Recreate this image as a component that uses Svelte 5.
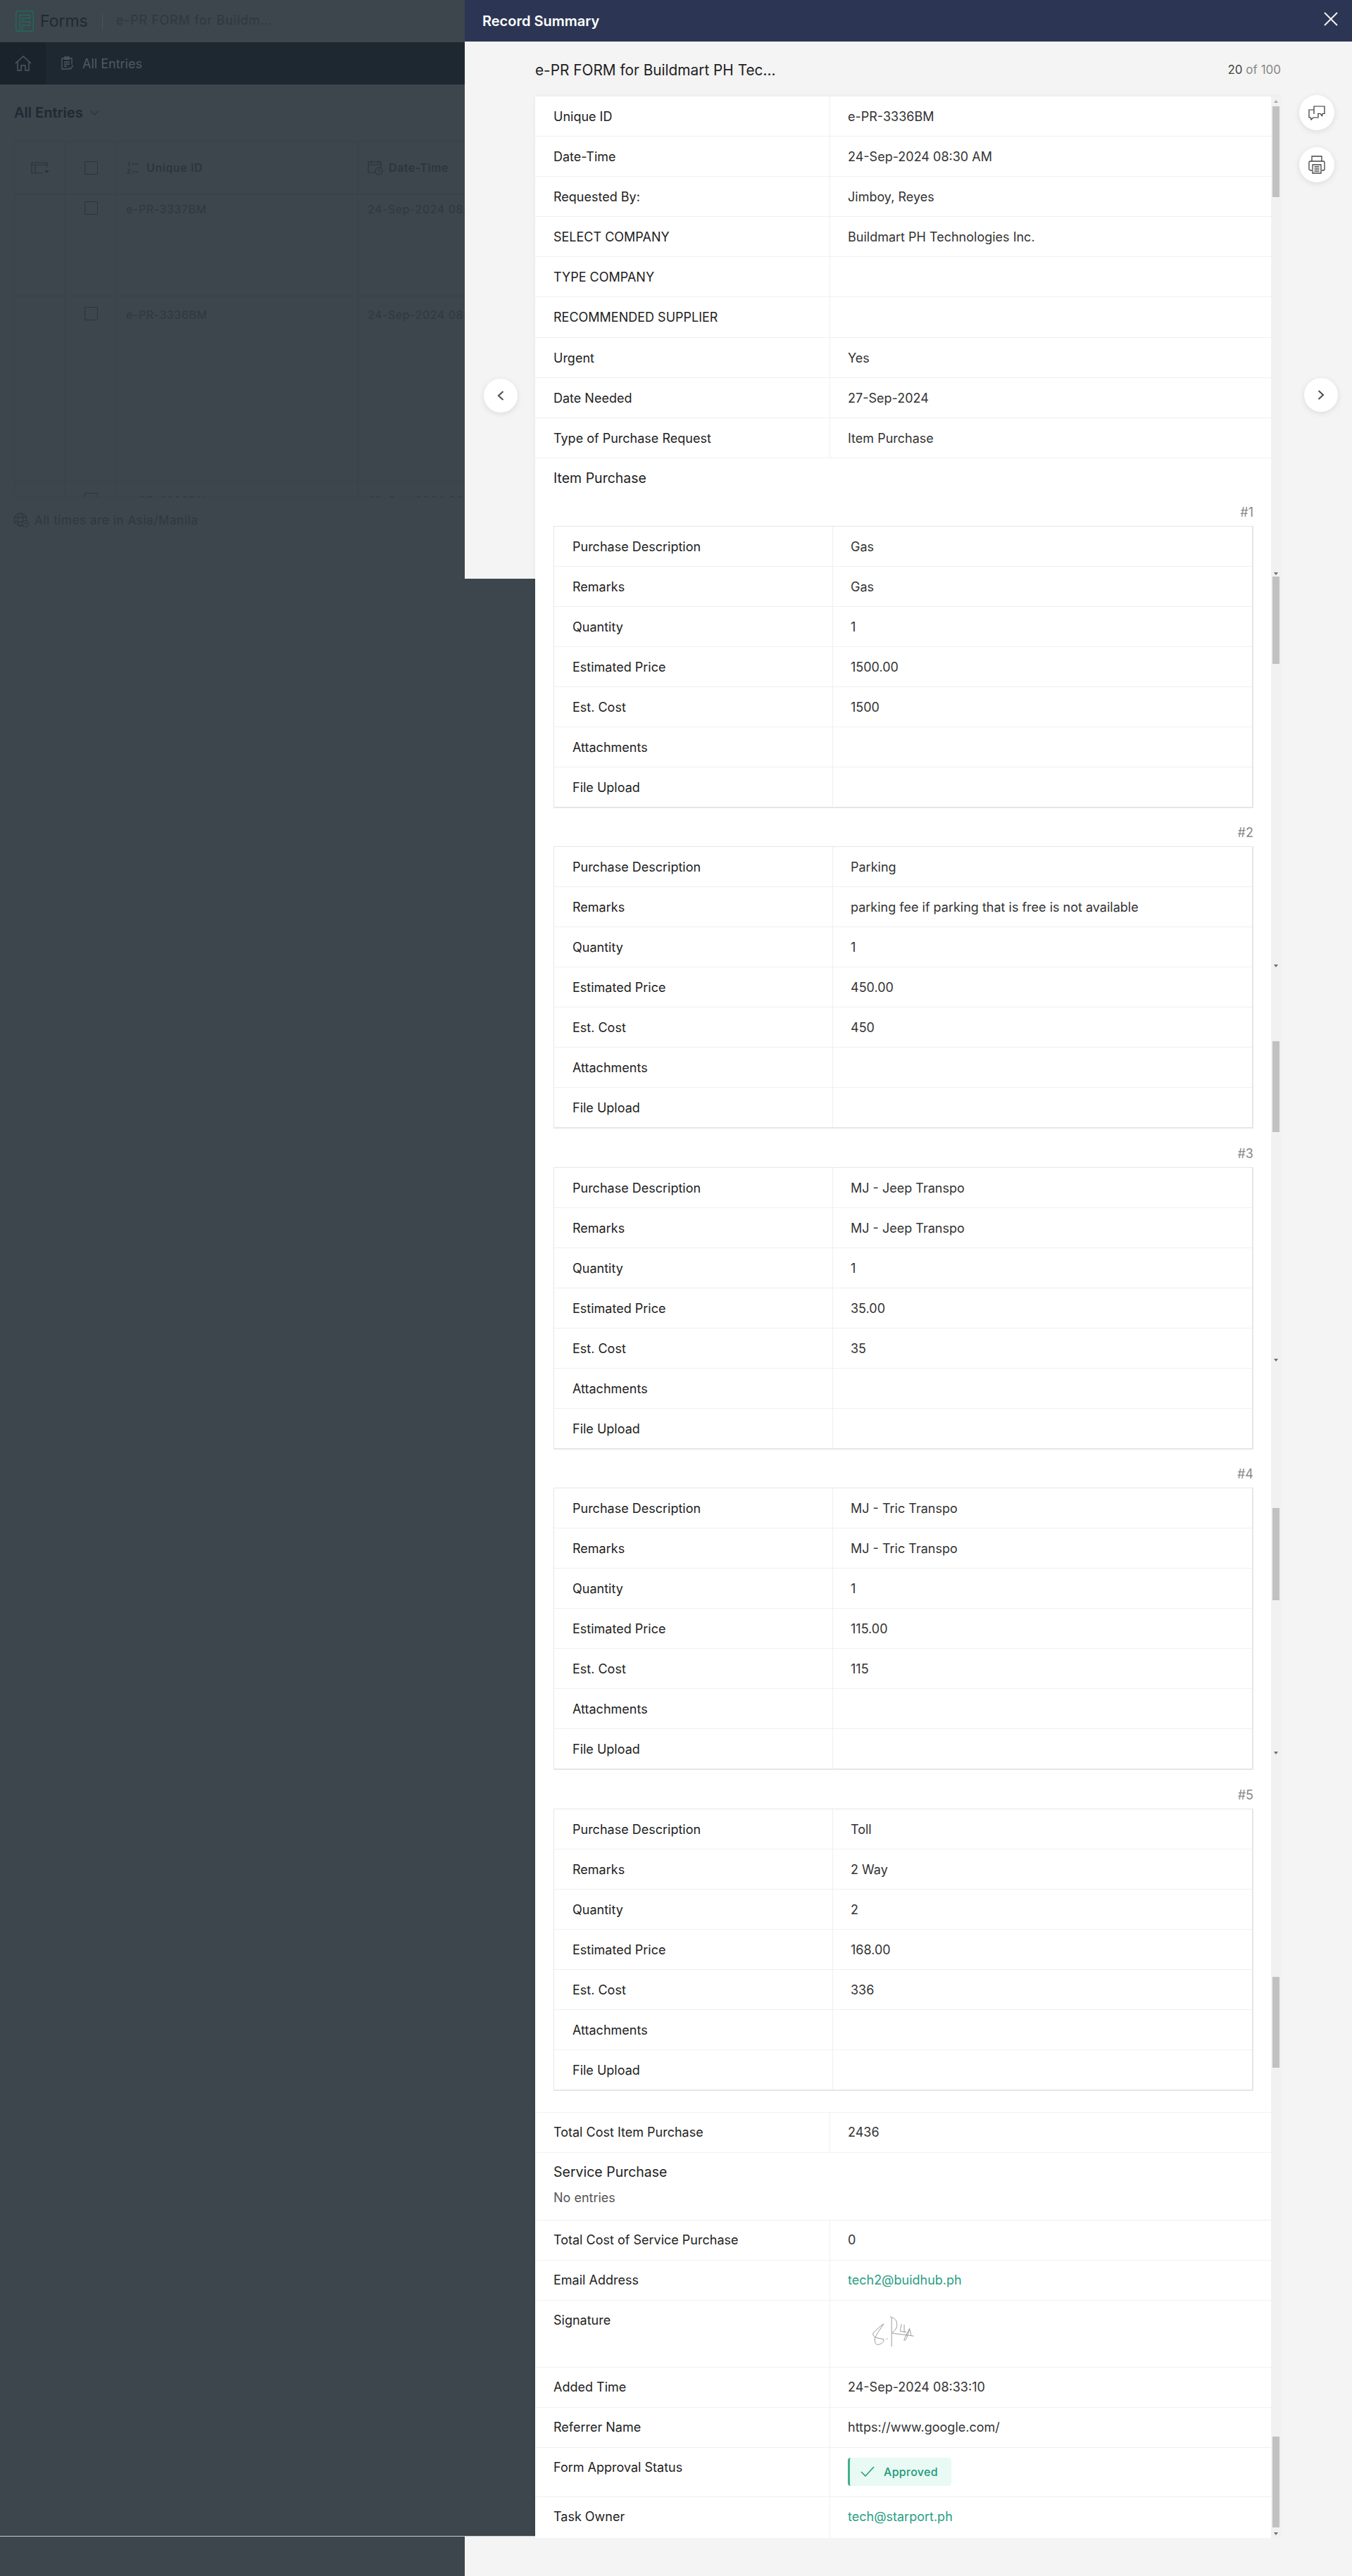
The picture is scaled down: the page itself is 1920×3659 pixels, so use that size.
<script>
	const topRows = [
		["Unique ID", "e-PR-3336BM"],
		["Date-Time", "24-Sep-2024 08:30 AM"],
		["Requested By:", "Jimboy, Reyes"],
		["SELECT COMPANY", "Buildmart PH Technologies Inc."],
		["TYPE COMPANY", ""],
		["RECOMMENDED SUPPLIER", ""],
		["Urgent", "Yes"],
		["Date Needed", "27-Sep-2024"],
		["Type of Purchase Request", "Item Purchase"],
	];

	const items = [
		{ desc: "Gas", remarks: "Gas", qty: "1", price: "1500.00", cost: "1500" },
		{ desc: "Parking", remarks: "parking fee if parking that is free is not available", qty: "1", price: "450.00", cost: "450" },
		{ desc: "MJ - Jeep Transpo", remarks: "MJ - Jeep Transpo", qty: "1", price: "35.00", cost: "35" },
		{ desc: "MJ - Tric Transpo", remarks: "MJ - Tric Transpo", qty: "1", price: "115.00", cost: "115" },
		{ desc: "Toll", remarks: "2 Way", qty: "2", price: "168.00", cost: "336" },
	];

	const itemFields = (it) => [
		["Purchase Description", it.desc],
		["Remarks", it.remarks],
		["Quantity", it.qty],
		["Estimated Price", it.price],
		["Est. Cost", it.cost],
		["Attachments", ""],
		["File Upload", ""],
	];

	// pieces of the stitched scrollbar, offsets from the card top
	const thumbs = [
		[14, 129],
		[682, 124],
		[1342, 129],
		[2005, 131],
		[2671, 129],
		[3324, 129],
	];
	const arrows = [676, 1233, 1793, 2351, 3460];
</script>

<div class="page">
	<header class="topbar">
		<svg class="logo" viewBox="0 0 26 30" fill="none" stroke="#1f6b58" stroke-width="1.4">
			<rect x="0.7" y="0.7" width="24.6" height="28.6" rx="2.5" />
			<path d="M6 28V6.5h14.5V11H9.5M9.5 11v5h11v5H9.500v7" />
		</svg>
		<span class="brand">Forms</span>
		<span class="sep"></span>
		<span class="form-name">e-PR FORM for Buildm...</span>
	</header>

	<nav class="navbar">
		<div class="home">
			<svg viewBox="0 0 24 22" width="24" height="22" fill="none" stroke="#4d5a65" stroke-width="1.4">
				<path d="M1 11 12 1l11 10M4 9v12h5v-7h6v7h5V9" />
			</svg>
		</div>
		<div class="nav-item">
			<svg viewBox="0 0 20 20" width="20" height="20" fill="none" stroke="#4d5a65" stroke-width="1.3">
				<path d="M12 18H2V3h14v9M6 1h6v3H6zM5 8h8M5 11h8M5 14h4M12 16l2 2 4-5" />
			</svg>
			<span>All Entries</span>
		</div>
	</nav>

	<div class="view-title">
		<span>All Entries</span>
		<svg viewBox="0 0 12 7" width="12" height="7" fill="none" stroke="#2a343d" stroke-width="1.1"><path d="m.5.5 5.500 5.500L11.500.5" /></svg>
	</div>

	<div class="table">
		<div class="t-row t-head">
			<div class="cell c1">
				<svg viewBox="0 0 26 17" width="26" height="17" fill="none" stroke="#2a343d" stroke-width="1.1">
					<path d="M1 1h22v6M1 4h22M1 1v15h16M6 4v12" /><path d="m19 12h7l-3.500 4z" fill="#2a343d" stroke="none" />
				</svg>
			</div>
			<div class="cell c2"><span class="check"></span></div>
			<div class="cell c3">
				<svg viewBox="0 0 18 19" width="18" height="19" fill="none" stroke="#2a343d" stroke-width="1.1">
					<path d="M2 3 3.500 1.500V8M7 4h10M1 11.500h4l-4 5.500h4.500M7 15h10" />
				</svg>
				<span>Unique ID</span>
			</div>
			<div class="cell c4">
				<svg viewBox="0 0 22 22" width="22" height="22" fill="none" stroke="#2a343d" stroke-width="1.1">
					<path d="M11 18H1V3h18v9M1 7h18M5 1v4M15 1v4" /><circle cx="16" cy="16" r="5" /><path d="M16 13v3h2" />
				</svg>
				<span>Date-Time</span>
			</div>
		</div>
		<div class="t-row t-r1">
			<div class="cell c1"></div>
			<div class="cell c2"><span class="check"></span></div>
			<div class="cell c3 val">e-PR-3337BM</div>
			<div class="cell c4 val">24-Sep-2024 08:30 AM</div>
		</div>
		<div class="t-row t-r2">
			<div class="cell c1"></div>
			<div class="cell c2"><span class="check"></span></div>
			<div class="cell c3 val">e-PR-3336BM</div>
			<div class="cell c4 val">24-Sep-2024 08:30 AM</div>
		</div>
		<div class="t-row t-r3">
			<div class="cell c1"></div>
			<div class="cell c2"><span class="check"></span></div>
			<div class="cell c3 val">e-PR-3335BM</div>
			<div class="cell c4 val">20-Sep-2024 09:00 AM</div>
		</div>
	</div>

	<div class="tz">
		<svg viewBox="0 0 22 21" width="22" height="21" fill="none" stroke="#2a343d" stroke-width="1">
			<circle cx="10" cy="10" r="9" /><ellipse cx="10" cy="10" rx="4" ry="9" /><path d="M1 7h18M1 13h13" />
			<circle cx="17" cy="16" r="4.500" fill="#3d454d" /><path d="M17 14v2.500h1.500" />
		</svg>
		<span>All times are in Asia/Manila</span>
	</div>

	<div class="spacer"></div>
	<div class="fold"></div>
	<div class="page-end"></div>
</div>

<section class="panel">
	<div class="panel-head">
		<span>Record Summary</span>
		<svg viewBox="0 0 20 20" width="20" height="20" fill="none" stroke="#f0f1f4" stroke-width="2"><path d="m1 1 18 18M19 1 1 19" /></svg>
	</div>

	<div class="panel-body">
		<div class="side-left">
			<div class="side-top">
				<button class="round nav-btn" aria-label="Previous record">
					<svg viewBox="0 0 10 14" width="10" height="14" fill="none" stroke="#555" stroke-width="2.200"><path d="M8.500 1 2 7l6.500 6" /></svg>
				</button>
			</div>
			<div class="side-bottom"></div>
		</div>

		<div class="center">
			<div class="title-row">
				<span class="title">e-PR FORM for Buildmart PH Tec...</span>
				<span class="count"><b>20</b> of 100</span>
			</div>

			<div class="card">
				<div class="content">
					{#each topRows as [label, value]}
						<div class="row upper"><div class="lbl">{label}</div><div class="val-cell">{value}</div></div>
					{/each}

					<div class="section">
						<div class="section-title">Item Purchase</div>
						{#each items as it, i}
							<div class="item">
								<div class="item-no">#{i + 1}</div>
								<div class="subform">
									{#each itemFields(it) as [label, value]}
										<div class="sub-row"><div class="sub-lbl">{label}</div><div class="sub-val">{value}</div></div>
									{/each}
								</div>
							</div>
						{/each}
					</div>

					<div class="row"><div class="lbl">Total Cost Item Purchase</div><div class="val-cell">2436</div></div>
					<div class="service">
						<div class="service-title">Service Purchase</div>
						<div class="no-entries">No entries</div>
					</div>
					<div class="row"><div class="lbl">Total Cost of Service Purchase</div><div class="val-cell">0</div></div>
					<div class="row"><div class="lbl">Email Address</div><div class="val-cell link">tech2@buidhub.ph</div></div>
					<div class="row sig-row">
						<div class="lbl">Signature</div>
						<div class="val-cell">
							<svg class="sig" viewBox="140 50 190 140" fill="none" stroke="#8b8b8b" stroke-width="2.600" stroke-linecap="round">
								<path d="M190 90 150 125c-6 10 4 22 20 24l24 5c2 10-6 18-20 22-12 4-18-2-18-26 8-20 24-40 38-62" />
								<path d="M207 152h3" />
								<path d="M228 62v122M222 58c14 4 26 10 28 24 2 16 2 28-20 44" />
								<path d="M270 90c-2 14-6 26-4 30l24 3M282 92v32" />
								<path d="M305 108c-8 16-20 36-24 50 6 4 12-8 16-24l8-24 6 26" />
								<path d="M232 128l90 12" />
							</svg>
						</div>
					</div>
					<div class="row"><div class="lbl">Added Time</div><div class="val-cell">24-Sep-2024 08:33:10</div></div>
					<div class="row referrer"><div class="lbl">Referrer Name</div><div class="val-cell">https://www.google.com/</div></div>
					<div class="row status-row">
						<div class="lbl">Form Approval Status</div>
						<div class="val-cell">
							<span class="badge">
								<svg viewBox="0 0 20 15" width="20" height="15" fill="none" stroke="#1f9a7c" stroke-width="1.500"><path d="m1 8 6 6L19 1" /></svg>
								Approved
							</span>
						</div>
					</div>
					<div class="row last"><div class="lbl">Task Owner</div><div class="val-cell link">tech@starport.ph</div></div>
				</div>

				<div class="track">
					<span class="arrow up" style="top: 5px"></span>
					{#each thumbs as [top, h]}
						<span class="thumb" style="top: {top}px; height: {h}px"></span>
					{/each}
					{#each arrows as top}
						<span class="arrow" style="top: {top}px"></span>
					{/each}
				</div>
			</div>

			<div class="card-end"></div>
		</div>

		<div class="side-right">
			<button class="round tool first" aria-label="Comments">
				<svg viewBox="0 0 24 21" width="24" height="21" fill="none" stroke="#333" stroke-width="1.200">
					<path d="M8 12V1h15v10.500h-3l-.500 3-2.500-3h-4" />
					<path d="M8 6H1v11h2.500l.500 3 3-3h7v-5" />
				</svg>
			</button>
			<button class="round tool" aria-label="Print">
				<svg viewBox="0 0 24 26" width="24" height="26" fill="none" stroke="#444" stroke-width="1.300">
					<path d="M5 8V1h14v7M5 21H3a2 2 0 0 1-2-2v-9a2 2 0 0 1 2-2h18a2 2 0 0 1 2 2v9a2 2 0 0 1-2 2h-2" />
					<path d="M6 13h12v12H6zM8.500 16h7M8.500 19h7M8.500 22h7" />
				</svg>
			</button>
			<button class="round nav-btn next" aria-label="Next record">
				<svg viewBox="0 0 10 14" width="10" height="14" fill="none" stroke="#555" stroke-width="2.200"><path d="m1.500 1 6.500 6-6.500 6" /></svg>
			</button>
		</div>
	</div>
</section>

<style>
	:global(body) {
		margin: 0;
		font-family: Inter, "Liberation Sans", sans-serif;
		color: #222;
	}

	* {
		box-sizing: border-box;
	}

	.page {
		height: 3659px;
		background: #3d454d;
		display: flex;
		flex-direction: column;
		overflow: hidden;
	}

	.topbar {
		height: 60px;
		display: flex;
		align-items: center;
		padding-left: 22px;
		flex-shrink: 0;
	}

	.logo {
		width: 26px;
		height: 30px;
	}

	.brand {
		margin-left: 9px;
		font-size: 23px;
		color: #1f2a33;
	}

	.sep {
		width: 1px;
		height: 22px;
		background: #4a525a;
		margin: 0 19px 0 20px;
	}

	.form-name {
		font-size: 18px;
		color: #2e3842;
		letter-spacing: 0.7px;
		position: relative;
		top: -2px;
	}

	.navbar {
		height: 60px;
		background: #1e2831;
		display: flex;
		flex-shrink: 0;
	}

	.home {
		width: 65px;
		background: #1a232c;
		display: flex;
		align-items: center;
		justify-content: center;
	}

	.nav-item {
		display: flex;
		align-items: center;
		gap: 11px;
		padding-left: 21px;
		font-size: 18px;
		color: #4f5a64;
	}

	.view-title {
		height: 80px;
		padding-left: 20px;
		display: flex;
		align-items: center;
		gap: 10px;
		font-size: 20px;
		font-weight: 600;
		color: #1f2933;
		flex-shrink: 0;
	}

	.table {
		margin-left: 20px;
		width: 1400px;
		height: 507px;
		overflow: hidden;
		border: 1px solid #38424c;
		border-radius: 4px;
		flex-shrink: 0;
	}

	.t-row {
		display: flex;
		border-bottom: 1px solid #38424c;
	}

	.t-head {
		height: 75px;
	}
	.t-r1 {
		height: 145px;
	}
	.t-r2 {
		height: 264px;
	}
	.t-r3 {
		height: 60px;
	}

	.cell {
		border-right: 1px solid #38424c;
		font-size: 16px;
		letter-spacing: 0.6px;
	}

	.c1 {
		width: 72px;
	}
	.c2 {
		width: 72px;
	}
	.c3 {
		width: 343px;
	}
	.c4 {
		flex: 1;
	}

	.t-head .cell {
		display: flex;
		align-items: center;
		color: #2a343d;
		font-weight: 500;
	}

	.t-head .c1 {
		justify-content: center;
	}

	.t-head .c3 {
		padding-left: 15px;
		gap: 10px;
	}

	.t-head .c4 {
		padding-left: 14px;
		gap: 8px;
	}

	.c2 {
		padding-left: 27px;
	}

	.check {
		display: block;
		width: 19px;
		height: 19px;
		border: 1px solid #2b3540;
		border-radius: 2px;
	}

	.t-r1 .c2 {
		padding-top: 10px;
	}

	.t-r2 .c2,
	.t-r3 .c2 {
		padding-top: 15px;
	}

	.val {
		padding: 10px 0 0 14px;
		color: #2e3842;
		line-height: 22px;
	}

	.t-r2 .val,
	.t-r3 .val {
		padding-top: 15px;
	}

	.tz {
		margin: 21px 0 0 19px;
		display: flex;
		align-items: center;
		gap: 8px;
		font-size: 17px;
		letter-spacing: 0.6px;
		color: #2e3842;
		flex-shrink: 0;
	}

	.spacer {
		flex: 1;
	}

	.fold {
		height: 1px;
		background: #c8ccd0;
		flex-shrink: 0;
	}

	.page-end {
		height: 56px;
		flex-shrink: 0;
	}

	.panel {
		position: absolute;
		top: 0;
		left: 660px;
		width: 1260px;
		height: 3659px;
		display: flex;
		flex-direction: column;
	}

	.panel-head {
		height: 59px;
		background: #2c3654;
		color: #fff;
		font-size: 20px;
		font-weight: 600;
		display: flex;
		align-items: center;
		justify-content: space-between;
		padding: 0 20px 0 25px;
		flex-shrink: 0;
	}

	.panel-head svg {
		position: relative;
		top: -3px;
	}

	.panel-body {
		flex: 1;
		display: flex;
	}

	.side-left {
		width: 100px;
		display: flex;
		flex-direction: column;
		justify-content: space-between;
	}

	.side-top {
		height: 763px;
		background: #f4f4f4;
		padding: 479px 0 0 27px;
	}

	.side-bottom {
		height: 56px;
		background: #f4f4f4;
	}

	.round {
		display: flex;
		align-items: center;
		justify-content: center;
		border: none;
		padding: 0;
		background: #fff;
		border-radius: 50%;
		box-shadow: 0 2px 8px rgba(0, 0, 0, 0.1);
	}

	.nav-btn {
		width: 48px;
		height: 48px;
	}

	.center {
		width: 1060px;
		display: flex;
		flex-direction: column;
	}

	.title-row {
		height: 78px;
		background: #f4f4f4;
		display: flex;
		align-items: center;
		justify-content: space-between;
		padding-right: 1px;
		padding-top: 2px;
		flex-shrink: 0;
	}

	.title {
		font-size: 20.800px;
		font-weight: 400;
		color: #222;
	}

	.count {
		font-size: 17px;
		color: #888;
	}

	.count b {
		font-weight: 400;
		color: #444;
	}

	.card {
		display: flex;
		background: #fff;
		box-shadow: 0 0 6px rgba(0, 0, 0, 0.06);
	}

	.content {
		width: 1045px;
		flex-shrink: 0;
		font-size: 18px;
	}

	.track {
		width: 15px;
		background: #f1f1f1;
		position: relative;
	}

	.thumb {
		position: absolute;
		left: 2px;
		width: 10px;
		background: #c1c1c1;
	}

	.arrow {
		position: absolute;
		left: 4px;
		border-left: 3.500px solid transparent;
		border-right: 3.500px solid transparent;
		border-top: 4px solid #6e6e6e;
	}

	.arrow.up {
		border-top: none;
		border-bottom: 4px solid #a8a8a8;
	}

	.row {
		display: flex;
		height: 57.1px;
		border-bottom: 1px solid #f0f0f0;
	}

	.lbl {
		width: 419px;
		padding-left: 26px;
		border-right: 1px solid #f0f0f0;
		line-height: 55px;
		color: #222;
		flex-shrink: 0;
	}

	.val-cell {
		flex: 1;
		padding-left: 25px;
		line-height: 55px;
		color: #333;
	}

	.upper .lbl,
	.upper .val-cell {
		line-height: 58px;
	}

	.link {
		color: #2b9e85;
	}

	.section {
		padding: 0 25px 30px 26px;
		border-bottom: 1px solid #f0f0f0;
	}

	.section-title {
		height: 58px;
		line-height: 57px;
		font-size: 19.500px;
	}

	.item + .item {
		margin-top: 16.500px;
	}

	.item-no {
		height: 38px;
		line-height: 38px;
		text-align: right;
		color: #888;
	}

	.subform {
		border: 1px solid #e6e6e6;
		border-right-width: 2px;
		border-bottom-width: 2px;
	}

	.sub-row {
		display: flex;
		height: 57px;
		border-bottom: 1px solid #f0f0f0;
	}

	.sub-row:last-child {
		border-bottom: none;
		height: 56px;
	}

	.sub-lbl {
		width: 396px;
		padding-left: 26px;
		border-right: 1px solid #f0f0f0;
		line-height: 58px;
		flex-shrink: 0;
	}

	.sub-val {
		flex: 1;
		padding-left: 25px;
		line-height: 58px;
		color: #333;
	}

	.service {
		height: 96px;
		padding-left: 26px;
		border-bottom: 1px solid #f0f0f0;
	}

	.service-title {
		line-height: 55px;
		height: 56px;
		font-size: 19.500px;
	}

	.no-entries {
		color: #555;
		line-height: 22px;
		margin-top: -3px;
	}

	.sig-row {
		height: 94.500px;
	}

	.sig {
		display: block;
		width: 63px;
		height: 47px;
		margin: 20px 0 0 33px;
	}

	.status-row {
		height: 70px;
	}

	.badge {
		display: inline-flex;
		align-items: center;
		gap: 13px;
		width: 147px;
		height: 40px;
		margin-top: 14px;
		padding-left: 15px;
		background: #e8faf3;
		border-left: 3px solid #3fb08f;
		border-radius: 4px;
		color: #1f9a7c;
		font-size: 16px;
		font-weight: 500;
		letter-spacing: 0.3px;
		line-height: 40px;
		vertical-align: top;
	}

	.last {
		border-bottom: none;
		height: 58px;
	}

	.card-end {
		flex: 1;
		background: #f4f4f4;
	}

	.side-right {
		width: 100px;
		background: #f4f4f4;
		padding-top: 76px;
	}

	.tool {
		width: 50px;
		height: 50px;
		margin: 0 0 24px 25px;
	}

	.next {
		margin: 278px 0 0 32px;
	}
</style>
